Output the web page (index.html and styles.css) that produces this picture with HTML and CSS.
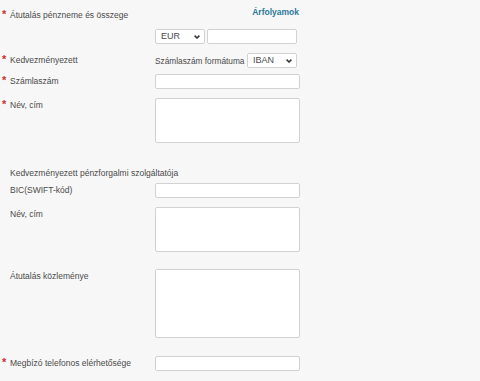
FILE: index.html
```html
<!DOCTYPE html>
<html lang="hu">
<head>
    <meta charset="UTF-8">
    <meta name="viewport" content="width=device-width, initial-scale=1.0">
    <title>Átutalás</title>
    <link rel="stylesheet" href="styles.css">
</head>
<body>

    <form class="transfer">
        <div class="row head-row">
            <div class="label first"><span class="mark">*</span>Átutalás pénzneme és összege</div>
            <div class="field right"><a href="#" class="rates">Árfolyamok</a></div>
        </div>

        <div class="row sp-7">
            <div class="label"></div>
            <div class="field pair">
                <div class="select-wrap cur">
                    <select><option>EUR</option></select>
                    <svg class="chev" width="6" height="4" viewBox="0 0 6 4"><path d="M0.6 0.6 L3 3 L5.4 0.6" fill="none" stroke="#333" stroke-width="1.5"/></svg>
                </div>
                <input type="text" class="amount">
            </div>
        </div>

        <div class="row sp-9">
            <div class="label"><span class="mark">*</span>Kedvezményezett</div>
            <div class="field pair">
                <span class="inline-label">Számlaszám formátuma</span>
                <div class="select-wrap fmt">
                    <select><option>IBAN</option></select>
                    <svg class="chev" width="6" height="4" viewBox="0 0 6 4"><path d="M0.6 0.6 L3 3 L5.4 0.6" fill="none" stroke="#333" stroke-width="1.5"/></svg>
                </div>
            </div>
        </div>

        <div class="row sp-6">
            <div class="label"><span class="mark">*</span>Számlaszám</div>
            <div class="field"><input type="text"></div>
        </div>

        <div class="row sp-9">
            <div class="label"><span class="mark">*</span>Név, cím</div>
            <div class="field"><textarea class="short"></textarea></div>
        </div>

        <div class="section-title">Kedvezményezett pénzforgalmi szolgáltatója</div>

        <div class="row sp-3">
            <div class="label"><span class="mark"></span>BIC(SWIFT-kód)</div>
            <div class="field"><input type="text"></div>
        </div>

        <div class="row sp-9">
            <div class="label"><span class="mark"></span>Név, cím</div>
            <div class="field"><textarea class="short"></textarea></div>
        </div>

        <div class="row sp-17">
            <div class="label"><span class="mark"></span>Átutalás közleménye</div>
            <div class="field"><textarea class="tall"></textarea></div>
        </div>

        <div class="row sp-18">
            <div class="label"><span class="mark">*</span>Megbízó telefonos elérhetősége</div>
            <div class="field"><input type="text"></div>
        </div>
    </form>

</body>
</html>
```

FILE: styles.css
```css
body, html {
    margin: 0;
    padding: 0;
    background-color: #f7f7f7;
    font-family: "Liberation Sans", Arial, sans-serif;
    font-size: 8.5px;
    color: #4a4a4a;
}

.transfer {
    padding-top: 6px;
    width: 300px;
}

.row {
    display: grid;
    grid-template-columns: 155px 145px;
    margin-top: 8px;
}

.head-row {
    margin-top: 0;
}

.sp-3 { margin-top: 3px; }
.sp-6 { margin-top: 6px; }
.sp-7 { margin-top: 7px; }
.sp-9 { margin-top: 9px; }
.sp-17 { margin-top: 17px; }
.sp-18 { margin-top: 18px; }

.label {
    line-height: 14px;
    white-space: nowrap;
}

.label.first {
    padding-top: 2px;
}

.mark {
    display: inline-block;
    width: 10px;
    padding-left: 2px;
    box-sizing: border-box;
    color: #c9302c;
    font-size: 11px;
    font-weight: bold;
    line-height: 10px;
    vertical-align: top;
    margin-top: 1px;
}

.field {
    display: flex;
}

.right {
    justify-content: flex-end;
    padding-right: 1px;
    line-height: 12px;
}

.rates {
    color: #2e7a9c;
    font-weight: bold;
    text-decoration: none;
}

.pair {
    align-items: center;
    width: 142px;
}

input, textarea, select {
    font-family: inherit;
    font-size: 8.5px;
    color: #4a4a4a;
    background: #fff;
    border: 1px solid #d2d2d2;
    border-radius: 2px;
    box-sizing: border-box;
    margin: 0;
    outline: none;
}

input {
    width: 145px;
    height: 15px;
    padding: 0 4px;
}

textarea {
    width: 145px;
    resize: none;
    padding: 2px 4px;
    display: block;
}

textarea.short { height: 45px; }
textarea.tall { height: 69px; }

.select-wrap {
    position: relative;
    height: 15px;
}

.select-wrap select {
    -webkit-appearance: none;
    appearance: none;
    width: 100%;
    height: 15px;
    padding: 0 0 0 5px;
    line-height: 13px;
    font-size: 9px;
    color: #4a4a4a;
}

.chev {
    position: absolute;
    right: 5px;
    top: 6px;
    pointer-events: none;
}

.cur {
    width: 50px;
}

.amount {
    width: 90px;
    margin-left: 2px;
}

.inline-label {
    flex: 1;
    white-space: nowrap;
    font-size: 8.3px;
}

.fmt {
    width: 50px;
}

.section-title {
    margin-top: 23px;
    padding-left: 10px;
    line-height: 14px;
}
```
